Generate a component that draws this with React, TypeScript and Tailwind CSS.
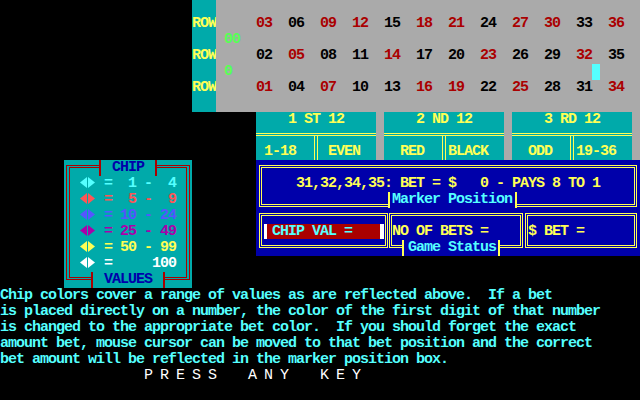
import React from "react";

// VGA text mode look: 8x16 cells on an 80x25 screen
const dos =
	"font-['Liberation_Mono',monospace] text-[15px] leading-4 tracking-[-1px] font-bold whitespace-pre";

const RED_NUMBERS = new Set([
	1, 3, 5, 7, 9, 12, 14, 16, 18, 19, 21, 23, 25, 27, 30, 32, 34, 36,
]);

const columns = Array.from({ length: 12 }, (_, i) => i);

function NumberRow({ offset }: { offset: number }) {
	return (
		<div className="flex h-4 pl-[40px]">
			{columns.map((c) => {
				const n = c * 3 + offset;
				return (
					<span
						key={n}
						className={`w-[32px] ${
							RED_NUMBERS.has(n) ? "text-[#AA0000]" : "text-black"
						}`}
					>
						{String(n).padStart(2, "0")}
					</span>
				);
			})}
		</div>
	);
}

function TableTop() {
	return (
		<div className="flex h-[112px]">
			<div className="w-[192px]" />
			<div className="flex w-[24px] flex-col gap-4 bg-[#00AAAA] pt-4 text-[#FFFF55]">
				<div>ROW</div>
				<div>ROW</div>
				<div>ROW</div>
			</div>
			<div className="flex flex-1 flex-col bg-[#AAAAAA] pt-4">
				<NumberRow offset={3} />
				<div className="h-4 pl-2 text-[#55FF55]">00</div>
				<NumberRow offset={2} />
				<div className="flex h-4 pl-2">
					<span className="w-2 text-[#55FF55]">0</span>
					<span className="ml-[360px] h-4 w-2 bg-[#55FFFF]" />
				</div>
				<NumberRow offset={1} />
			</div>
		</div>
	);
}

const dozens = [
	{ title: "    1 ST 12", left: " 1-18", right: " EVEN" },
	{ title: "    2 ND 12", left: "  RED", right: "BLACK" },
	{ title: "    3 RD 12", left: "  ODD", right: "19-36" },
];

function OutsideBets() {
	return (
		<div className="flex h-[48px]">
			<div className="w-[256px]" />
			<div className="flex flex-1 gap-2 bg-[#AAAAAA] pr-2">
				{dozens.map((d) => (
					<div
						key={d.title}
						className="flex w-[120px] flex-col bg-[#00AAAA] text-[#FFFF55]"
					>
						<div className="h-4">{d.title}</div>
						<div className="mt-[5px] h-[3px] border-y border-[#FFFF55]" />
						<div className="flex h-[24px]">
							<div className="w-[56px] pt-2">{d.left}</div>
							<div className="ml-[2px] mr-[2px] w-[4px] border-x border-[#FFFF55]" />
							<div className="w-[56px] pt-2">{d.right}</div>
						</div>
					</div>
				))}
			</div>
		</div>
	);
}

function ChipIcon({ color }: { color: string }) {
	return (
		<svg width="16" height="16" viewBox="0 0 16 16" className="shrink-0">
			<polygon points="0,6.5 7,1 7,12" fill={color} />
			<polygon points="8,1 15,6.5 8,12" fill={color} />
		</svg>
	);
}

const chipRows = [
	{ color: "#55FFFF", text: " =  1 -  4" },
	{ color: "#FF5555", text: " =  5 -  9" },
	{ color: "#5555FF", text: " = 10 - 24" },
	{ color: "#AA00AA", text: " = 25 - 49" },
	{ color: "#FFFF55", text: " = 50 - 99" },
	{ color: "#FFFFFF", text: " =     100" },
];

function ChipValues() {
	return (
		<div className="relative h-[128px] w-[128px] bg-[#00AAAA]">
			<div className="ml-[2px] mt-[5px] h-[115px] w-[124px] border-x-4 border-y-[3px] border-double border-[#AA0000] pl-[10px] pt-2">
				{chipRows.map((r) => (
					<div key={r.color} className="flex h-4" style={{ color: r.color }}>
						<ChipIcon color={r.color} />
						<span>{r.text}</span>
					</div>
				))}
			</div>
			<div className="absolute left-[35px] top-0 flex h-4 bg-[#00AAAA] text-[#0000AA]">
				<span className="w-[2px] bg-[#AA0000]" />
				<span className="ml-[11px] mr-[11px]">CHIP</span>
				<span className="w-[2px] bg-[#AA0000]" />
			</div>
			<div className="absolute left-[27px] top-[112px] flex h-4 bg-[#00AAAA] text-[#0000AA]">
				<span className="w-[2px] bg-[#AA0000]" />
				<span className="ml-[11px] mr-[11px]">VALUES</span>
				<span className="w-[2px] bg-[#AA0000]" />
			</div>
		</div>
	);
}

function StatusPanel() {
	return (
		<div className="flex flex-1 flex-col">
			<div className="relative h-[96px] bg-[#0000AA] px-[3px] pt-[5px] text-[#FFFF55]">
				<div className="h-[42px] border-[3px] border-double border-[#FFFF55] pl-[34px] pt-2">
					31,32,34,35: BET = $   0 - PAYS 8 TO 1
				</div>
				<div className="mt-[6px] flex h-[35px] gap-[1px]">
					<div className="w-[129px] border-[3px] border-double border-[#FFFF55] pl-[2px] pt-2">
						<div className="flex h-[15px] w-[120px]">
							<span className="w-[3px] bg-white" />
							<span className="flex-1 bg-[#AA0000] pl-[5px] text-[#55FFFF]">
								CHIP VAL =
							</span>
							<span className="w-[4px] bg-white" />
						</div>
					</div>
					<div className="w-[134px] border-[3px] border-double border-[#FFFF55] pt-2">
						NO OF BETS =
					</div>
					<div className="ml-[1px] flex-1 border-[3px] border-double border-[#FFFF55] pt-2">
						$ BET =
					</div>
				</div>
				<div className="absolute left-[132px] top-[32px] flex h-4 bg-[#0000AA]">
					<span className="w-[2px] bg-[#FFFF55]" />
					<span className="ml-[2px] mr-[3px] text-[#55FFFF]">Marker Position</span>
					<span className="w-[2px] bg-[#FFFF55]" />
				</div>
				<div className="absolute left-[146px] top-[80px] flex h-4 bg-[#0000AA]">
					<span className="w-[2px] bg-[#FFFF55]" />
					<span className="ml-[4px] mr-[2px] text-[#55FFFF]">Game Status</span>
					<span className="w-[2px] bg-[#FFFF55]" />
				</div>
			</div>
		</div>
	);
}

const helpLines = [
	"Chip colors cover a range of values as are reflected above.  If a bet",
	"is placed directly on a number, the color of the first digit of that number",
	"is changed to the appropriate bet color.  If you should forget the exact",
	"amount bet, mouse cursor can be moved to that bet position and the correct",
	"bet amount will be reflected in the marker position box.",
];

function HelpText() {
	return (
		<div className="flex flex-col">
			{helpLines.map((line) => (
				<div key={line} className="h-4 text-[#55FFFF]">
					{line}
				</div>
			))}
			<div className="h-4 font-normal text-white">
				{"                  P R E S S    A N Y    K E Y"}
			</div>
		</div>
	);
}

export default function App() {
	return (
		<div className={`h-[400px] w-[640px] overflow-hidden bg-black ${dos}`}>
			<TableTop />
			<OutsideBets />
			<div className="flex h-[128px]">
				<div className="w-[64px]" />
				<ChipValues />
				<div className="w-[64px]" />
				<StatusPanel />
			</div>
			<HelpText />
		</div>
	);
}
